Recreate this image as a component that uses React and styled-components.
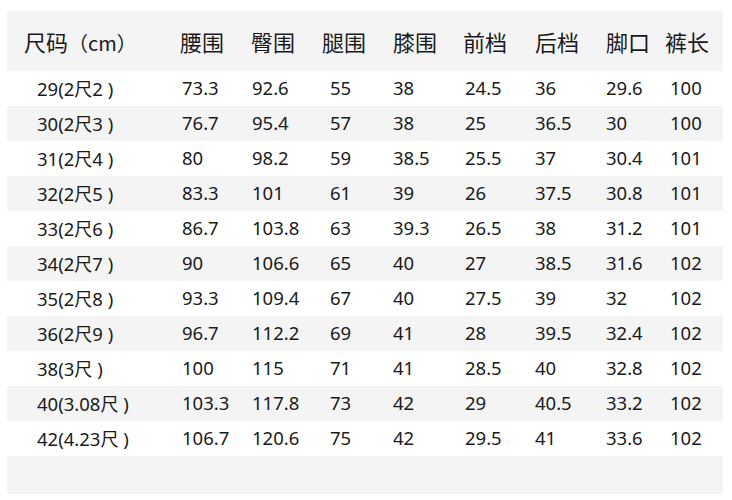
import React from "react";
import styled, { createGlobalStyle } from "styled-components";

const GlobalStyle = createGlobalStyle`
  html, body {
    margin: 0;
    padding: 0;
    background: #fff;
  }
  body {
    font-family: "Noto Sans", "Noto Sans CJK SC", sans-serif;
    color: #1a1a1a;
  }
`;

const Page = styled.div`
  width: 732px;
  height: 500px;
  padding: 11px 9px 0 7px;
  box-sizing: border-box;
`;

const Chart = styled.div`
  display: flex;
  flex-direction: column;
  width: 716px;
`;

const Row = styled.div`
  display: grid;
  grid-template-columns: 173px 71px 71px 71px 70px 72px 71px 59px 58px;
  align-items: center;
  height: ${(props) => props.height || 35}px;
  background-color: ${(props) => (props.shaded ? "#f4f4f4" : "#fff")};
`;

const HeadCell = styled.div`
  font-family: "Noto Sans CJK SC", "Noto Sans", sans-serif;
  font-size: 22px;
  padding-left: ${(props) => props.indent || 0}px;
  white-space: nowrap;
  line-height: 1;
`;

const Unit = styled.span`
  font-size: 20px;
`;

const Cell = styled.div`
  font-size: 18.5px;
  padding-left: ${(props) => props.indent || 0}px;
  white-space: nowrap;
  line-height: 1;
`;

const Chi = styled.span`
  font-family: "Noto Sans CJK SC", sans-serif;
  font-size: 18px;
`;

const headers = ["腰围", "臀围", "腿围", "膝围", "前档", "后档", "脚口", "裤长"];
const cellIndent = [30, 2, 1, 8, 0, 2, 0, 0, 5];

const rows = [
  ["29", "2尺2", "73.3", "92.6", "55", "38", "24.5", "36", "29.6", "100"],
  ["30", "2尺3", "76.7", "95.4", "57", "38", "25", "36.5", "30", "100"],
  ["31", "2尺4", "80", "98.2", "59", "38.5", "25.5", "37", "30.4", "101"],
  ["32", "2尺5", "83.3", "101", "61", "39", "26", "37.5", "30.8", "101"],
  ["33", "2尺6", "86.7", "103.8", "63", "39.3", "26.5", "38", "31.2", "101"],
  ["34", "2尺7", "90", "106.6", "65", "40", "27", "38.5", "31.6", "102"],
  ["35", "2尺8", "93.3", "109.4", "67", "40", "27.5", "39", "32", "102"],
  ["36", "2尺9", "96.7", "112.2", "69", "41", "28", "39.5", "32.4", "102"],
  ["38", "3尺", "100", "115", "71", "41", "28.5", "40", "32.8", "102"],
  ["40", "3.08尺", "103.3", "117.8", "73", "42", "29", "40.5", "33.2", "102"],
  ["42", "4.23尺", "106.7", "120.6", "75", "42", "29.5", "41", "33.6", "102"],
];

const SizeLabel = ({ waist, chi }) => {
  const parts = chi.split("尺");
  return (
    <>
      {waist}({parts[0]}
      <Chi>尺</Chi>
      {parts[1]} )
    </>
  );
};

export default function App() {
  return (
    <Page>
      <GlobalStyle />
      <Chart>
        <Row shaded height={60}>
          <HeadCell indent={17}>
            尺码<Unit>（cm）</Unit>
          </HeadCell>
          {headers.map((h) => (
            <HeadCell key={h}>{h}</HeadCell>
          ))}
        </Row>
        {rows.map(([waist, chi, ...values], r) => (
          <Row key={waist} shaded={r % 2 === 1}>
            <Cell indent={cellIndent[0]}>
              <SizeLabel waist={waist} chi={chi} />
            </Cell>
            {values.map((v, i) => (
              <Cell key={i} indent={cellIndent[i + 1]}>
                {v}
              </Cell>
            ))}
          </Row>
        ))}
        <Row shaded height={38} />
      </Chart>
    </Page>
  );
}
